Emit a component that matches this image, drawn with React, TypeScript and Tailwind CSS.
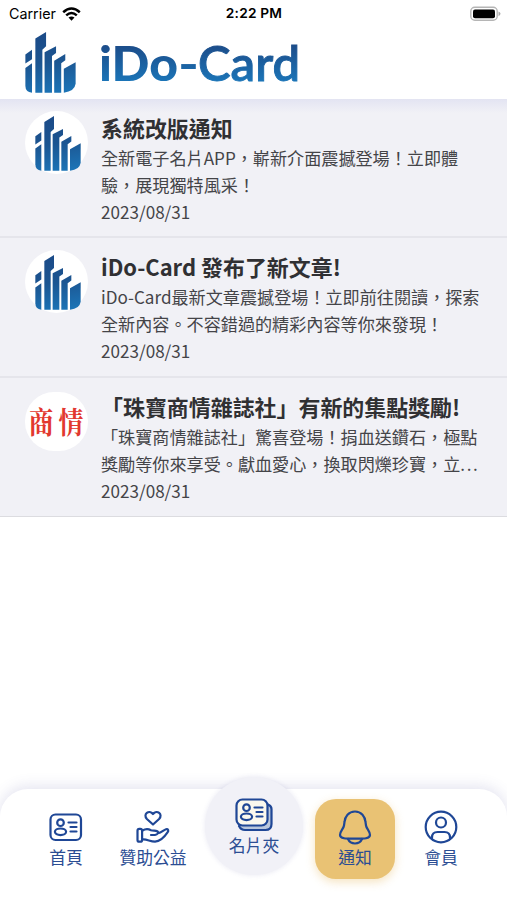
import type { ReactNode } from "react"

const notices = [
	{
		logo: "ido",
		title: "系統改版通知",
		lines: ["全新電子名片APP，嶄新介面震撼登場！立即體", "驗，展現獨特風采！"],
		date: "2023/08/31",
	},
	{
		logo: "ido",
		title: "iDo-Card 發布了新文章!",
		lines: ["iDo-Card最新文章震撼登場！立即前往閱讀，探索", "全新內容。不容錯過的精彩內容等你來發現！"],
		date: "2023/08/31",
	},
	{
		logo: "magazine",
		title: "「珠寶商情雜誌社」有新的集點獎勵!",
		lines: ["「珠寶商情雜誌社」驚喜登場！捐血送鑽石，極點", "獎勵等你來享受。獻血愛心，換取閃爍珍寶，立"],
		truncated: true,
		date: "2023/08/31",
	},
]

function Logo({ className }: { className: string }) {
	return (
		<svg viewBox="106 47 138 166" preserveAspectRatio="none" className={className}>
			<defs>
				<linearGradient id="logo" gradientUnits="userSpaceOnUse" x1="150" y1="47" x2="175" y2="213">
					<stop offset="0" stopColor="#1b4a87" />
					<stop offset="0.5" stopColor="#1c5591" />
					<stop offset="1" stopColor="#1c73b5" />
				</linearGradient>
			</defs>
			<g fill="url(#logo)">
				<path d="M107 108 125 95V121L107 133Z" />
				<path d="M107 145 125 132V212Q107 210 107 193Z" />
				<path d="M134 65 163 47V86L153 95V212H134Z" />
				<path d="M159 102 190 86V104L179 112V212H159Z" />
				<path d="M185 125 215 107V124L204 132V212H185Z" />
				<path d="M211 147 243 129V188Q240 209 211 212Z" />
			</g>
		</svg>
	)
}

function Wordmark() {
	return (
		<svg width="206" height="68" viewBox="0 0 206 68" className="ml-[23px]">
			<defs>
				<linearGradient id="word" gradientUnits="userSpaceOnUse" x1="0" y1="14" x2="0" y2="50">
					<stop offset="0" stopColor="#1c4d8a" />
					<stop offset="1" stopColor="#1b75b8" />
				</linearGradient>
			</defs>
			<g fill="url(#word)" fontFamily="Lato, sans-serif" fontSize="48">
				<text x="0" y="49" fontWeight="900" textLength="79" lengthAdjust="spacingAndGlyphs">
					iDo
				</text>
				<text x="79" y="49" fontWeight="700" textLength="21" lengthAdjust="spacingAndGlyphs">
					-
				</text>
				<text
					x="99"
					y="49"
					fontWeight="600"
					stroke="url(#word)"
					strokeWidth="0.9"
					textLength="102"
					lengthAdjust="spacingAndGlyphs"
				>
					Card
				</text>
			</g>
		</svg>
	)
}

function MagazineLogo() {
	return (
		<svg width="63" height="60" viewBox="0 0 63 60">
			<g fill="#e2382f" fontFamily="'Noto Serif CJK TC', 'Noto Sans CJK TC', serif" fontWeight="700" fontSize="25">
				<text transform="translate(3.5 40.5) scale(1 1.2)">商</text>
				<text transform="translate(33.5 40.5) scale(1 1.2)">情</text>
			</g>
		</svg>
	)
}

function StatusBar() {
	return (
		<div className="grid h-[27px] grid-cols-3 items-center pr-[6px] pl-[9px] text-black">
			<div className="flex items-center gap-[6px] font-[Inter] text-[14.3px]">
				Carrier
				<svg width="19" height="14" viewBox="0 0 19 14" fill="none" stroke="#000" strokeWidth="2.5">
					<path d="M1.2 5.2Q9.5-2.3 17.8 5.2" />
					<path d="M4.2 8.4Q9.5 3.6 14.8 8.4" />
					<path d="M9.5 13.7 6.5 10.6Q9.5 8.2 12.5 10.6Z" fill="#000" stroke="none" />
				</svg>
			</div>
			<div className="-ml-[2px] text-center font-[Inter] text-[13.7px] font-semibold tracking-[0.2px]">2:22 PM</div>
			<svg width="31" height="16" viewBox="0 0 31 16" className="justify-self-end">
				<rect x="0.8" y="1.3" width="26.4" height="13" rx="4" fill="#fff" stroke="#b5b5b5" strokeWidth="1.4" />
				<rect x="3" y="3.4" width="22" height="8.8" rx="2" fill="#000" />
				<path d="M28.5 5.5Q30.5 6.3 30.5 7.8T28.5 10.2Z" fill="#aaa" />
			</svg>
		</div>
	)
}

function PersonLines() {
	return (
		<>
			<circle cx="11.5" cy="9.7" r="3.3" />
			<ellipse cx="11.5" cy="18.8" rx="5.6" ry="3.3" />
			<path d="M19.5 9.5H27.5M21.5 14H27.5M21.5 18.5H27.5" />
		</>
	)
}

function Item({ label, className, children }: { label: string; className: string; children: ReactNode }) {
	return (
		<div className={`flex flex-col items-center text-[16.8px] leading-6 text-[#2b4d93] ${className}`}>
			{children}
			<span className="whitespace-nowrap">{label}</span>
		</div>
	)
}

const stroke = {
	fill: "none",
	stroke: "#1f4796",
	strokeWidth: 2.2,
	strokeLinecap: "round",
	strokeLinejoin: "round",
} as const

function App() {
	return (
		<div className="flex h-[900px] w-[507px] flex-col overflow-hidden bg-white font-['Noto_Sans_CJK_TC',sans-serif]">
			<header className="h-[99px] shrink-0">
				<StatusBar />
				<div className="flex items-start pt-[5px] pl-[25px]">
					<Logo className="h-[61px] w-[51px]" />
					<Wordmark />
				</div>
			</header>

			<main className="flex-1">
				<div className="bg-[#f1f1f6] bg-linear-to-b from-[#e3e4f2] to-[#f1f1f6] to-[14px]">
					{notices.map((notice) => (
						<div
							key={notice.title}
							className="flex h-[139.3px] border-b-2 border-[#e5e5eb] pt-[12px] pl-[25px] last:border-b last:border-[#dcdce0]"
						>
							{notice.logo === "ido" ? (
								<div className="flex size-[63px] shrink-0 items-center justify-center rounded-full bg-white">
									<Logo className="mt-[2px] ml-[2px] h-[55px] w-[46px]" />
								</div>
							) : (
								<div className="mt-[2px] h-[59px] w-[63px] shrink-0 overflow-hidden rounded-[29px] bg-white">
									<MagazineLogo />
								</div>
							)}
							<div className="ml-[13px] whitespace-nowrap text-[#444448]">
								<h2 className="text-[21.95px] leading-[33px] font-bold text-[#303033]">{notice.title}</h2>
								{notice.lines.map((line, i) => (
									<p key={line} className="h-[27px] text-[17.13px] leading-[27px]">
										{line}
										{notice.truncated && i === 1 && <span className="tracking-[1.6px]">...</span>}
									</p>
								))}
								<p className="text-[17.1px] leading-[27px]">{notice.date}</p>
							</div>
						</div>
					))}
				</div>
			</main>

			<nav className="flex h-[111px] shrink-0 items-start rounded-t-[28px] bg-white shadow-[0_-3px_14px_rgba(90,90,160,0.16)]">
				<Item label="首頁" className="ml-[35px] w-[62px] pt-[24px]">
					<svg width="34" height="29" viewBox="0 0 34 29" className="mb-[3px]" {...stroke}>
						<rect x="1.5" y="1.5" width="30.5" height="25.5" rx="5" />
						<PersonLines />
					</svg>
				</Item>
				<Item label="贊助公益" className="ml-[20px] w-[72px] pt-[21px]">
					<svg width="34" height="34" viewBox="0 0 34 34" className="mb-[1px]" {...stroke}>
						<path d="M17 14.5 10.9 9C6.5 4.2 13.2-.6 17 4 20.8-.6 27.5 4.2 23.1 9Z" />
						<rect x="1.5" y="18.8" width="4.6" height="12.9" rx="1.8" />
						<path d="M6.5 20.5C9.5 18.7 12.5 18.9 15 20.2 17 21 19.5 20.3 21.2 21.2 23 22.5 21.5 24.7 19 24.9L15 25M22 23.2C25.5 22.6 27.5 20 30 19.2 32.2 18.7 32.8 20.6 31.7 22.2 28.5 27 25 31.5 19 31.6 14 31.6 11 29 6.5 29.5" />
					</svg>
				</Item>
				<Item
					label="名片夾"
					className="-mt-[12px] ml-[16px] size-[98px] rounded-full bg-[#f1f1f7] pt-[21px] shadow-[0_0_5px_rgba(90,90,160,0.14)]"
				>
					<svg width="38" height="34" viewBox="0 0 38 34" className="mb-[1px]" {...stroke}>
						<path d="M33 6.5Q36.5 8 36.5 11V26Q36.5 32 30.5 32H10Q6 32 4 28" fill="#b9c7dc" />
						<rect x="1.5" y="1.5" width="31" height="26" rx="6" fill="#faf8ee" />
						<PersonLines />
					</svg>
				</Item>
				<Item
					label="通知"
					className="mt-[10px] ml-[12px] size-[80px] rounded-[21px] bg-[#e9c274] pt-[11px] shadow-[0_3px_10px_rgba(233,194,116,0.45)]"
				>
					<svg width="34" height="36" viewBox="0 0 34 36" className="-mb-[1px]" {...stroke}>
						<path d="M17 1.5C10.5 1.5 7 6.5 6.5 12L6 15.5C5.500 19 2 21 2 25 2 29 9 28.7 17 28.7S32 29 32 25C32 21 28.5 19 28 15.5L27.5 12C27 6.5 23.5 1.5 17 1.5Z" />
						<path d="M10 29Q12 33.5 17 33.5T24 29" />
					</svg>
				</Item>
				<Item label="會員" className="ml-[15px] w-[62px] pt-[21px]">
					<svg width="34" height="34" viewBox="0 0 34 34" className="mb-[1px]" {...stroke}>
						<circle cx="17" cy="17" r="15.3" />
						<circle cx="17" cy="12.5" r="5" />
						<path d="M8 29V27.5Q8 22 13.5 22H20.5Q26 22 26 27.5V29" />
					</svg>
				</Item>
			</nav>
		</div>
	)
}

export default App
